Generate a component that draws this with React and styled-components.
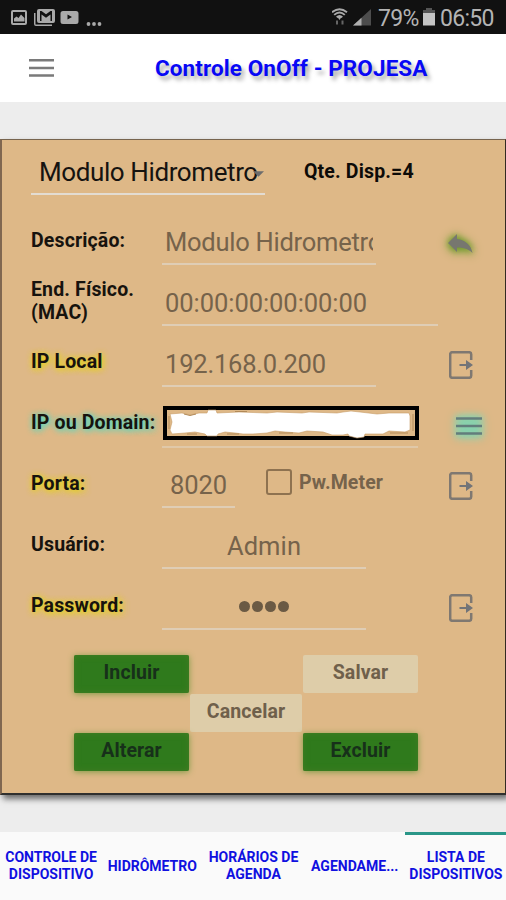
import React from "react";
import styled, { createGlobalStyle, css } from "styled-components";

const App = () => {
  return (
    <Screen>
      <GlobalStyle />
      <StatusBar>
        <StatusIcons />
        <StatusRight>
          <SignalIcons />
          <StatusText $width={40}>79%</StatusText>
          <BatteryIcon />
          <StatusText $width={55}>06:50</StatusText>
        </StatusRight>
      </StatusBar>

      <Header>
        <MenuIcon />
        <AppTitle>Controle OnOff - PROJESA</AppTitle>
      </Header>

      <Content>
        <Panel>
          <TopRow>
            <Select>
              Modulo Hidrometro
              <Caret viewBox="0 0 12 7">
                <path d="M0 0h12L6 6z" />
              </Caret>
            </Select>
            <Count>Qte. Disp.=4</Count>
          </TopRow>

          <Row>
            <Label>Descrição:</Label>
            <Field $width={214} $spacing={-0.25}>
              <Clip>Modulo Hidrometro</Clip>
            </Field>
            <Action>
              <ReplyIcon />
            </Action>
          </Row>
          <Row>
            <Label>
              End. Físico.
              <br />
              (MAC)
            </Label>
            <Field $width={276} $spacing={-0.05}>00:00:00:00:00:00</Field>
          </Row>
          <Row>
            <Label $glow="#e6d21e">IP Local</Label>
            <Field $width={214} $spacing={-0.2}>192.168.0.200</Field>
            <Action>
              <ExitIcon />
            </Action>
          </Row>
          <Row>
            <Label $glow="#5fd6bd">IP ou Domain:</Label>
            <Field $width={256} $faint>
              <Masked />
            </Field>
            <Action $shift={9}>
              <ListIcon />
            </Action>
          </Row>
          <Row>
            <Label $glow="#e6d21e">Porta:</Label>
            <Field $width={73} $center $spacing={-0.1}>8020</Field>
            <CheckLabel>
              <CheckBox />
              Pw.Meter
            </CheckLabel>
            <Action $up={3}>
              <ExitIcon />
            </Action>
          </Row>
          <Row>
            <Label>Usuário:</Label>
            <Field $width={204} $center $spacing={0.1}>Admin</Field>
          </Row>
          <Row>
            <Label $glow="#e6d21e">Password:</Label>
            <Field $width={204} $center>
              <Dots>
                <Dot />
                <Dot />
                <Dot />
                <Dot />
              </Dots>
            </Field>
            <Action $up={2}>
              <ExitIcon />
            </Action>
          </Row>

          <Buttons>
            <Button $col={1} $row={1} $active>Incluir</Button>
            <Button $col={3} $row={1}>Salvar</Button>
            <Button $col={2} $row={2}>Cancelar</Button>
            <Button $col={1} $row={3} $active>Alterar</Button>
            <Button $col={3} $row={3} $active>Excluir</Button>
          </Buttons>
        </Panel>
      </Content>

      <Tabs>
        <Tab>CONTROLE DE<br />DISPOSITIVO</Tab>
        <Tab>HIDRÔMETRO</Tab>
        <Tab>HORÁRIOS DE<br />AGENDA</Tab>
        <Tab>AGENDAME...</Tab>
        <Tab $active>LISTA DE<br />DISPOSITIVOS</Tab>
      </Tabs>
    </Screen>
  );
};

export default App;

const StatusIcons = () => (
  <svg width="96" height="20" viewBox="0 0 96 20" fill="#a9a9a9">
    <path fillRule="evenodd" d="M2 2h12a2 2 0 0 1 2 2v11a2 2 0 0 1-2 2H2a2 2 0 0 1-2-2V4a2 2 0 0 1 2-2zM2 4v11h12V4z" />
    <path d="M3 13.500v-3l2.500-2 2 1.500 2.500-3.500 3.500 3.500v3.500z" />
    <path d="M23 5h1.500v11.500H41V18H25a2 2 0 0 1-2-2z" />
    <path fillRule="evenodd" d="M28 1h14a2 2 0 0 1 2 2v10a2 2 0 0 1-2 2H28a2 2 0 0 1-2-2V3a2 2 0 0 1 2-2zM29 3v10h1.500V6.500L35 9.800l4.500-3.300V13H41V3h-1.500L35 6.300 30.500 3z" />
    <path fillRule="evenodd" d="M52 3h13a2.500 2.500 0 0 1 2.500 2.500v8A2.500 2.500 0 0 1 65 16H52a2.500 2.500 0 0 1-2.500-2.500v-8A2.500 2.500 0 0 1 52 3zM56.500 6.500v5l4.500-2.500z" />
    <circle cx="77.500" cy="16" r="1.900" />
    <circle cx="83" cy="16" r="1.900" />
    <circle cx="88.500" cy="16" r="1.900" />
  </svg>
);

const SignalIcons = () => (
  <svg width="41" height="20" viewBox="0 0 41 20">
    <g fill="none" stroke="#a9a9a9" strokeWidth="1.900">
      <path d="M0 4.200Q7.500 -1.800 15 4.200" />
      <path d="M2.200 6.900Q7.500 2.200 12.800 6.900" />
      <path d="M4.700 9.200Q7.500 6.700 10.300 9.200" />
    </g>
    <path d="M5.500 9h4l-2 3z" fill="#a9a9a9" />
    <path d="M5 12.500v4M10.500 12.500v4" stroke="#666" strokeWidth="2" />
    <path d="M39 1v16.500H21z" fill="#4d4d4d" />
    <path d="M29.500 9.700v7.800H21z" fill="#b0b0b0" />
  </svg>
);

const BatteryIcon = () => (
  <svg width="12" height="18" viewBox="0 0 12 18">
    <path d="M3 0h6v2h3v4H0V2h3z" fill="#555" />
    <path d="M0 5h12v12.500H0z" fill="#c4c4c4" />
  </svg>
);

const MenuIcon = () => (
  <svg width="25" height="20" viewBox="0 0 25 20">
    <path d="M0 2.200h25M0 9.900h25M0 17.400h25" stroke="#7a7a7a" strokeWidth="2.500" />
  </svg>
);

const ListIcon = () => (
  <GlowSvg $glow="#62dcbd" width="26" height="20" viewBox="0 0 26 20">
    <path d="M0 2.500h26M0 10h26M0 17.500h26" stroke="#637d7c" strokeWidth="2.700" />
  </GlowSvg>
);

const ReplyIcon = () => (
  <GlowSvg $glow="#6f9a2c" width="26" height="19" viewBox="0 0 26 19">
    <path d="M1 9L10 0v5C18.500 6 24 11 25.500 19c-4-4-9-5.500-15.500-5.500V18z" fill="#77776f" />
  </GlowSvg>
);

const ExitIcon = () => (
  <svg width="24" height="28" viewBox="0 0 24 28">
    <path
      d="M22.200 9V3.200a2 2 0 0 0-2-2H3.200a2 2 0 0 0-2 2v21.600a2 2 0 0 0 2 2h17a2 2 0 0 0 2-2V19"
      fill="none"
      stroke="#7f7871"
      strokeWidth="2.500"
    />
    <path d="M10.500 13h6.500V9l7 5-7 5v-4h-6.500z" fill="#727478" />
  </svg>
);

// address painted over with a rough white brush
const Masked = () => (
  <MaskBox>
    <svg width="248" height="26" viewBox="0 0 248 26">
      <path
        d="M3 4L15 3L23 5L32 3L40 3L41 0L49 0L50 3L72 2L100 3L110 2L135 3L142 2L170 3L176 2L184 1L193 2L210 4L222 3L242 3L243 6L243 20L238 22L222 21L216 24L198 24L197 27L190 28L182 26L181 24L176 25L165 25L156 22L140 21L132 23L118 22L108 21L100 23L86 24L76 24L68 23L58 22L51 24L50 26L40 26L38 24L28 22L18 23L5 24L3 20L5 12Z"
        fill="#fff"
        stroke="#c69b65"
        strokeWidth="0.6"
      />
      <path d="M2 6v13M17 4l6 1.500 6-1.500M20 24h10M60 24h12M112 23h14M223 23h18M68 1.500h12M246 4v17" fill="none" stroke="#b28a58" strokeWidth="1" />
    </svg>
  </MaskBox>
);

const GlobalStyle = createGlobalStyle`
  body {
    margin: 0;
    font-family: Roboto, "Liberation Sans", sans-serif;
  }
  * {
    box-sizing: border-box;
  }
  svg {
    display: block;
    flex: none;
  }
`;

const Screen = styled.div`
  display: flex;
  flex-direction: column;
  width: 506px;
  height: 900px;
  overflow: hidden;
  background: #ededed;
`;
const StatusBar = styled.div`
  display: flex;
  justify-content: space-between;
  height: 34px;
  padding: 8px 11px 0;
  background: #111;
`;
const StatusRight = styled.div`
  display: flex;
  gap: 5px;
`;
const StatusText = styled.span`
  width: ${(props) => props.$width}px;
  color: #b4b4b4;
  font-size: 23px;
  line-height: 22px;
  letter-spacing: -0.7px;
  white-space: nowrap;
`;
const Header = styled.header`
  display: flex;
  align-items: center;
  height: 68px;
  padding-left: 29px;
  background: #fff;
`;
const AppTitle = styled.h1`
  margin: 0 0 0 101px;
  color: #0808f5;
  font-size: 22.5px;
  font-weight: 700;
  letter-spacing: 0.09px;
  white-space: nowrap;
  text-shadow: 3px 4px 4px rgba(0, 0, 0, 0.35);
`;
const Content = styled.main`
  height: 730px;
  padding-top: 37px;
`;
const Panel = styled.section`
  height: 656px;
  padding: 10px 0 0 29px;
  background: #deb887;
  border: 1px solid #332a22;
  border-top: 1px solid #77644e;
  border-left: 2px solid #806750;
  border-bottom: 2px solid #30302f;
  box-shadow: 3px 4px 6px rgba(0, 0, 0, 0.55);
`;
const TopRow = styled.div`
  display: flex;
  height: 54px;
`;
const Select = styled.div`
  display: flex;
  align-items: center;
  width: 234px;
  height: 45px;
  padding: 1px 0 0 8px;
  border-bottom: 2px solid #e3dcd2;
  color: #161310;
  font-size: 26px;
  letter-spacing: -0.4px;
  white-space: nowrap;
`;
const Caret = styled.svg`
  width: 11px;
  height: 7px;
  margin: 4px 0 0 -5px;
  fill: #6c6c6c;
`;
const Count = styled.div`
  margin: 11px 0 0 39px;
  color: #0d0b08;
  font-size: 19.5px;
  font-weight: 700;
  line-height: 22px;
  letter-spacing: 0.15px;
`;
const Row = styled.div`
  display: flex;
  height: 60.9px;
`;
const Label = styled.div`
  display: flex;
  align-items: center;
  width: 131px;
  padding-top: 13px;
  color: #17130e;
  font-size: 19.5px;
  font-weight: 700;
  line-height: 22.5px;
  letter-spacing: 0.14px;
  white-space: nowrap;
  ${(props) =>
    props.$glow &&
    css`
      text-shadow: 1px 1px 6px ${props.$glow}, 1px 1px 6px ${props.$glow};
    `}
`;
const Field = styled.div`
  display: flex;
  align-items: flex-end;
  justify-content: ${(props) => (props.$center ? "center" : "flex-start")};
  width: ${(props) => props.$width}px;
  height: 60.9px;
  padding: 0 3px 6px;
  border-bottom: 2px solid ${(props) => (props.$faint ? "#e0c8a8" : "#dfcdb5")};
  color: #76634b;
  font-size: 25.5px;
  line-height: 30px;
  letter-spacing: ${(props) => props.$spacing ?? 0}px;
  white-space: nowrap;
`;
const Clip = styled.span`
  width: 208px;
  overflow: hidden;
`;
const Action = styled.div`
  display: flex;
  align-items: center;
  margin-left: auto;
  padding: ${(props) => 18 - (props.$up || 0)}px ${(props) => 32 - (props.$shift || 0)}px 0 0;
`;
const GlowSvg = styled.svg`
  overflow: visible;
  filter: drop-shadow(0 1px 4px ${(props) => props.$glow}) drop-shadow(0 0 3px ${(props) => props.$glow});
`;
const MaskBox = styled.div`
  width: 256px;
  height: 34px;
  margin: 0 0 0 -2px;
  border: 4px solid #000;

  & svg {
    overflow: visible;
  }
`;
const CheckLabel = styled.div`
  display: flex;
  align-items: center;
  gap: 7px;
  padding: 8px 0 0 31px;
  color: #76634b;
  font-size: 19.5px;
  font-weight: 700;
  letter-spacing: 0.1px;
`;
const CheckBox = styled.span`
  width: 26px;
  height: 26px;
  border: 2px solid #8e7250;
  border-radius: 3px;
`;
const Dots = styled.div`
  display: flex;
  gap: 1.800px;
  padding-bottom: 10px;
`;
const Dot = styled.i`
  width: 11px;
  height: 11px;
  border-radius: 50%;
  background: #6b5a44;
`;
const Buttons = styled.div`
  display: grid;
  grid-template-columns: 115px 112px 115px;
  grid-template-rows: repeat(3, 38px);
  gap: 1px;
  padding: 25px 0 0 43px;
`;
const Button = styled.button`
  grid-column: ${(props) => props.$col};
  grid-row: ${(props) => props.$row};
  padding: 0 0 3px;
  border: none;
  border-radius: 2px;
  background: #decda9;
  color: #6f604b;
  font-family: inherit;
  font-size: 19.5px;
  font-weight: 700;
  letter-spacing: 0.1px;
  ${(props) =>
    props.$active &&
    css`
      background: #2f7a1c;
      color: #17301a;
      box-shadow: 0 1px 6px #7d9a45, inset 0 0 6px #467d25;
    `}
`;
const Tabs = styled.nav`
  display: grid;
  grid-template-columns: repeat(5, 1fr);
  height: 68px;
  background: #fafafa;
`;
const Tab = styled.div`
  display: flex;
  align-items: center;
  justify-content: center;
  padding: 0 0 3px 1px;
  border-top: 3px solid ${(props) => (props.$active ? "#2a9688" : "transparent")};
  color: #1010e0;
  font-size: 14px;
  font-weight: 700;
  line-height: 17px;
  text-align: center;
  white-space: nowrap;
`;
